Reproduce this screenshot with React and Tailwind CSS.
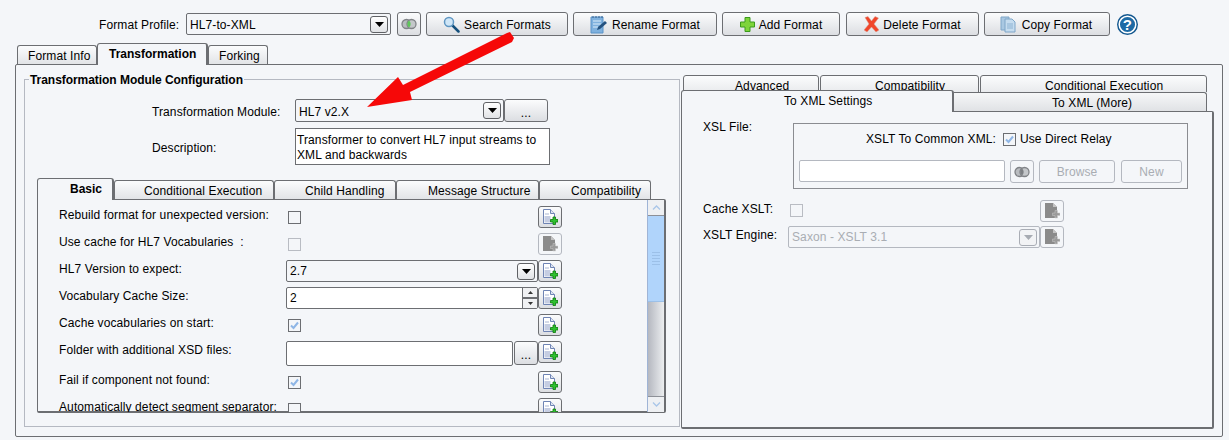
const font = { fontFamily: '"Liberation Sans", Arial, sans-serif' };

const btn = "flex items-center justify-center border border-[#6c6e72] rounded-[3px] bg-linear-to-b from-[#fbfcfd] to-[#dcdee2]";
const btnOff = "flex items-center justify-center border border-[#b4b8c0] rounded-[3px] bg-[#f4f6f9] text-[#a9adb3]";

function Arrow({ off }) {
  return (
    <span className={"flex h-[17px] w-[18px] shrink-0 items-center justify-center rounded-[3px] border " + (off ? "border-[#a9adb5] bg-[#f2f3f5]" : "border-[#5f6165] bg-linear-to-b from-white to-[#e1e3e6]")}>
      <svg width="9" height="5" viewBox="0 0 9 5"><path d="M0 0h9L4.5 5z" fill={off ? "#a7abb2" : "#000"} /></svg>
    </span>
  );
}

function Combo({ w, h = "h-[22px]", text, off, low }) {
  return (
    <div className={`flex ${w} ${h} shrink-0 items-center justify-between rounded-[2px] border pl-[3px] pr-[2px] ${off ? "border-[#b4b8c0] text-[#a9adb3]" : "border-[#6c6e72]"}`}>
      <span className={low ? "pt-[2px]" : ""}>{text}</span>
      <Arrow off={off} />
    </div>
  );
}

function Eye({ off }) {
  return (
    <svg width="16" height="12" viewBox="0 0 16 12">
      <circle cx="5.5" cy="6" r="4.5" fill="#b9bcc0" stroke="#808387" strokeWidth="1.3" />
      <circle cx="10.5" cy="6" r="4.5" fill="#c4c7ca" stroke="#808387" strokeWidth="1.3" />
      <path d="M8 2.5a4.5 4.5 0 0 1 0 7a4.5 4.5 0 0 1 0-7z" fill={off ? "#7d8084" : "#5fc65a"} />
    </svg>
  );
}

function DocIcon({ off }) {
  if (off) {
    return (
      <svg width="16" height="16" viewBox="0 0 16 16">
        <path d="M1 0h8l4 4v11H1z" fill="#8b8b8b" />
        <path d="M9 0v4h4z" fill="#c3c3c3" />
        <path d="M8.500 10h2.500V7.500h2.500V10H16v2.500h-2.500V15H11v-2.500H8.500z" fill="#9a9a9a" stroke="#c8c8c8" strokeWidth=".5" />
      </svg>
    );
  }
  return (
    <svg width="16" height="16" viewBox="0 0 16 16">
      <path d="M1.500.5h7l4 4v10h-11z" fill="#fff" stroke="#6f84b4" />
      <path d="M8.500.5v4h4" fill="#dfe5f2" stroke="#6f84b4" />
      <rect x="2.500" y="7" width="6" height="6.500" fill="#c5cde2" />
      <path d="M3 5h4" stroke="#a9b5d2" />
      <path d="M8.500 10.500h2.500V8h2.500v2.500H16V13h-2.500v2.500H11V13H8.500z" fill="#2fc02f" stroke="#0a7a0a" strokeWidth=".8" />
    </svg>
  );
}

function DocBtn({ off }) {
  return (
    <div className={(off ? btnOff : btn) + " h-[22px] w-[24px] shrink-0"}>
      <DocIcon off={off} />
    </div>
  );
}

function Check({ on, off }) {
  return (
    <span className={"flex h-[13px] w-[13px] shrink-0 items-center justify-center border bg-[#f4f6f9] " + (off ? "border-[#b9bcc3]" : "border-[#6c6e72]")}>
      {on && (
        <svg width="9" height="9" viewBox="0 0 9 9"><path d="M1 4.500l2.500 2.500L8 1.500" fill="none" stroke="#8fb6e6" strokeWidth="2" /></svg>
      )}
    </span>
  );
}

function ToolButton({ w, ml, icon, label, pr = "" }) {
  return (
    <div className={`${btn} ${w} ${ml} ${pr} h-[24px] shrink-0 gap-[4px]`}>
      {icon}
      <span className="pt-[2px]">{label}</span>
    </div>
  );
}

function TopTab({ w, pl, active, label }) {
  if (active) {
    return (
      <div className={`${w} ${pl} relative z-10 -mb-px flex h-[22px] items-start rounded-t-[3px] border border-r-2 border-b-0 border-[#6c6e72] bg-[#f4f6f9] pt-[3px] font-bold tracking-normal`}>
        {label}
      </div>
    );
  }
  return (
    <div className={`${w} ${pl} flex h-[19px] items-center rounded-t-[3px] border border-b-0 border-[#6c6e72] bg-linear-to-b from-[#fbfcfd] to-[#e2e4e7] pt-[2px]`}>
      {label}
    </div>
  );
}

function Row({ h = "h-[22px]", mb = "mb-[5px]", label, children }) {
  return (
    <div className={`${h} ${mb} flex items-start pl-[21px]`}>
      <div className="h-[18px] w-[227px] shrink-0 leading-[18px]">{label}</div>
      <div className="flex h-full w-[252px] shrink-0 items-start">{children}</div>
      <DocBtn off={label.startsWith("Use cache")} />
    </div>
  );
}

function Scrollbar() {
  return (
    <div className="flex h-[212px] w-[17px] shrink-0 flex-col border-l border-[#9fb4d6] bg-linear-to-r from-[#b5b8c0] to-[#eceef0]">
      <div className="flex h-[16px] items-center justify-center border-b border-[#8d9097] bg-[#eef0f3]">
        <svg width="9" height="5" viewBox="0 0 9 5"><path d="M1 4.500L4.500 1 8 4.500" fill="none" stroke="#a9c6e8" strokeWidth="1.300" /></svg>
      </div>
      <div className="flex h-[86px] flex-col items-center justify-center gap-[2px] bg-[#b0d4fb] border-b border-[#9cc0e8]">
        <div className="h-px w-[8px] bg-[#9cc0e8]" />
        <div className="h-px w-[8px] bg-[#9cc0e8]" />
        <div className="h-px w-[8px] bg-[#9cc0e8]" />
        <div className="h-px w-[8px] bg-[#9cc0e8]" />
        <div className="h-px w-[8px] bg-[#9cc0e8]" />
      </div>
      <div className="flex-1" />
      <div className="flex h-[16px] items-center justify-center border-t border-[#8d9097] bg-[#eef0f3]">
        <svg width="9" height="5" viewBox="0 0 9 5"><path d="M1 .5L4.500 4 8 .5" fill="none" stroke="#a9c6e8" strokeWidth="1.300" /></svg>
      </div>
    </div>
  );
}

function BasicPane() {
  return (
    <div className="ml-[12px] flex h-[214px] w-[629px] rounded-b-[2px] rounded-tr-[2px] border border-r-2 border-b-2 border-[#6c6e72]">
      <div className="h-[212px] flex-1 overflow-hidden pt-[6px]">
        <Row label="Rebuild format for unexpected version:">
          <span className="ml-[2px] mt-[5px]"><Check /></span>
        </Row>
        <Row label={"Use cache for HL7 Vocabularies\u00a0 :"}>
          <span className="ml-[2px] mt-[5px]"><Check off /></span>
        </Row>
        <Row label="HL7 Version to expect:">
          <Combo w="w-[252px]" text="2.7" />
        </Row>
        <Row label="Vocabulary Cache Size:">
          <div className="flex h-[22px] w-[252px] rounded-[2px] border border-[#6c6e72] bg-white">
            <span className="flex-1 pl-[3px] pt-[3px]">2</span>
            <div className="flex w-[15px] flex-col">
              <div className="flex h-[10px] items-center justify-center border-b border-l border-[#6c6e72] bg-[#f0f1f3]">
                <svg width="5" height="3" viewBox="0 0 5 3"><path d="M0 3h5L2.500 0z" fill="#333" /></svg>
              </div>
              <div className="flex flex-1 items-center justify-center border-l border-t border-[#6c6e72] bg-[#f0f1f3]">
                <svg width="5" height="3" viewBox="0 0 5 3"><path d="M0 0h5L2.500 3z" fill="#333" /></svg>
              </div>
            </div>
          </div>
        </Row>
        <Row label="Cache vocabularies on start:">
          <span className="ml-[2px] mt-[5px]"><Check on /></span>
        </Row>
        <Row h="h-[25px]" label="Folder with additional XSD files:">
          <div className="h-[25px] w-[227px] rounded-[2px] border border-[#6c6e72] bg-white" />
          <div className={btn + " ml-px h-[24px] w-[24px] pt-[4px]"}>...</div>
        </Row>
        <Row label="Fail if component not found:">
          <span className="ml-[2px] mt-[5px]"><Check on /></span>
        </Row>
        <Row label="Automatically detect segment separator:">
          <span className="ml-[2px] mt-[5px]"><Check /></span>
        </Row>
      </div>
      <Scrollbar />
    </div>
  );
}

function XmlSettings() {
  return (
    <div className="relative z-10 flex h-[318px] w-[533px] flex-col rounded-r-[2px] rounded-b-[2px] border border-r-2 border-b-2 border-[#6c6e72] bg-[#f4f6f9] pl-[21px] pt-[7px]">
      <div className="flex">
        <div className="h-[16px] w-[90px] shrink-0 leading-[16px]">XSL File:</div>
        <div className="mt-[4px] h-[66px] w-[395px] border border-[#8a8c91] px-[5px] pt-[8px]">
          <div className="flex h-[14px] items-center pl-[67px]">
            <span>XSLT To Common XML:</span>
            <span className="ml-[7px]"><Check on /></span>
            <span className="ml-[4px]">Use Direct Relay</span>
          </div>
          <div className="mt-[14px] flex">
            <div className="h-[22px] w-[206px] rounded-[2px] border border-[#b4b8c0] bg-white" />
            <div className={btnOff + " ml-[5px] h-[23px] w-[24px]"}><Eye off /></div>
            <div className={btnOff + " ml-[5px] h-[23px] w-[76px]"}>Browse</div>
            <div className={btnOff + " ml-[6px] h-[23px] w-[61px]"}>New</div>
          </div>
        </div>
      </div>
      <div className="mt-[11px] flex h-[22px]">
        <div className="h-[18px] w-[87px] shrink-0 leading-[18px]">Cache XSLT:</div>
        <span className="mt-[4px]"><Check off /></span>
        <div className="ml-[237px]"><DocBtn off /></div>
      </div>
      <div className="mt-[4px] flex h-[22px]">
        <div className="h-[18px] w-[85px] shrink-0 leading-[18px]">XSLT Engine:</div>
        <Combo w="w-[252px]" text="Saxon - XSLT 3.1" off />
        <DocBtn off />
      </div>
    </div>
  );
}

export default function App() {
  return (
    <div className="relative h-[440px] w-[1229px] overflow-hidden bg-[#f4f6f9] text-[12px] leading-[14px] tracking-[0.1px] text-black" style={font}>
      <div className="flex h-[36px] items-center pl-[99px] pt-[12px]">
        <span className="w-[87px] shrink-0 pt-[2px]">Format Profile:</span>
        <Combo w="w-[205px]" text="HL7-to-XML" low />
        <div className={btn + " ml-[6px] h-[24px] w-[24px]"}><Eye /></div>
        <ToolButton w="w-[142px]" ml="ml-[5px]" label="Search Formats" icon={
          <svg width="17" height="17" viewBox="0 0 17 17">
            <path d="M9 9l6.500 6.500" stroke="#14507c" strokeWidth="2.500" strokeLinecap="round" />
            <circle cx="6" cy="6" r="4.500" fill="#cfe6f7" stroke="#5f96c2" strokeWidth="1.500" />
          </svg>
        } />
        <ToolButton w="w-[144px]" ml="ml-[5px]" label="Rename Format" icon={
          <svg width="18" height="19" viewBox="0 0 18 19">
            <path d="M1 2h12v16H1z" fill="#7fb1de" stroke="#5b93c8" />
            <path d="M3 1v2M6 1v2M9 1v2M12 1v2" stroke="#36638f" />
            <path d="M3 6h8M3 9h8M3 12h5" stroke="#dcecf9" />
            <path d="M7 15l1-3 7-6 2 2-7 6z" fill="#24527f" />
          </svg>
        } />
        <ToolButton w="w-[118px]" ml="ml-[5px]" label="Add Format" icon={
          <svg width="15" height="15" viewBox="0 0 15 15">
            <path d="M5 .5h5v4.500h4.500v5H10v4.500H5V10H.5V5H5z" fill="#7ed43a" stroke="#3b9a1c" />
          </svg>
        } />
        <ToolButton w="w-[133px]" ml="ml-[6px]" label="Delete Format" icon={
          <svg width="15" height="16" viewBox="0 0 15 16">
            <path d="M1 1.500l3-1 3.500 4.500L11 .5l3.500 1.500L10 8l5 6-3 2-4.500-5L3 16l-3-2 5-6z" fill="#f0452a" stroke="#d8a090" strokeWidth=".5" />
          </svg>
        } />
        <ToolButton w="w-[126px]" ml="ml-[5px]" pr="pr-[2px]" label="Copy Format" icon={
          <svg width="16" height="18" viewBox="0 0 16 18" className="mr-[2px]">
            <path d="M1 2h8v13H1z" fill="#a9c8e2" stroke="#7ea6c8" />
            <path d="M5 4h7l3 3v10H5z" fill="#c5dcef" stroke="#7ea6c8" />
            <path d="M7 9h6M7 11h6M7 13h6" stroke="#8db3d3" />
          </svg>
        } />
        <svg width="21" height="21" viewBox="0 0 21 21" className="ml-[7px] shrink-0">
          <circle cx="10.500" cy="10.500" r="10.500" fill="#12578f" />
          <circle cx="10.500" cy="10.500" r="8.300" fill="#1d6aa5" stroke="#fff" strokeWidth="1.500" />
          <text x="10.500" y="15.500" textAnchor="middle" fontSize="15" fontWeight="700" fill="#fff">?</text>
        </svg>
      </div>

      <div className="ml-[17px] mt-[7px] flex h-[21px] items-end">
        <TopTab w="w-[80px]" pl="pl-[10px]" label="Format Info" />
        <TopTab active w="w-[111px]" pl="pl-[11px]" label="Transformation" />
        <TopTab w="w-[60px]" pl="pl-[10px]" label="Forking" />
      </div>

      <div className="ml-[15px] flex h-[373px] w-[1208px] rounded-[2px] border border-[#6c6e72]">
        <div className="pl-[8px] pt-[7px]">
          <fieldset className="h-[355px] w-[656px] border border-[#b5b9c2]">
            <legend className="ml-[4px] h-[14px] px-[1px] font-bold leading-[16px] tracking-[-0.05px]">Transformation Module Configuration</legend>
            <div className="mt-[13px] flex">
              <div className="w-[270px] shrink-0 pl-[127px] pt-[6px]">Transformation Module:</div>
              <Combo w="w-[209px]" h="h-[23px]" text="HL7 v2.X" low />
              <div className={btn + " h-[23px] w-[44px] pt-[5px]"}>...</div>
            </div>
            <div className="mt-[6px] flex">
              <div className="w-[270px] shrink-0 pl-[127px] pt-[13px]">Description:</div>
              <div className="h-[37px] w-[255px] border border-[#6c6e72] bg-white pl-[1px] pt-[4px] leading-[15px]">
                Transformer to convert HL7 input streams to XML and backwards
              </div>
            </div>
            <div className="ml-[12px] mt-[13px] flex h-[21px] items-end">
              <TopTab active w="w-[77px]" pl="pl-[32px]" label="Basic" />
              <TopTab w="w-[160px]" pl="pl-[29px]" label="Conditional Execution" />
              <TopTab w="w-[122px]" pl="pl-[30px]" label="Child Handling" />
              <TopTab w="w-[143px]" pl="pl-[31px]" label="Message Structure" />
              <TopTab w="w-[112px]" pl="pl-[31px]" label="Compatibility" />
            </div>
            <BasicPane />
          </fieldset>
        </div>

        <div className="ml-px pt-[10px]">
          <div className="ml-[2px] flex h-[17px] gap-px overflow-hidden">
            <div className="h-[24px] w-[136px] rounded-t-[3px] border border-[#6c6e72] bg-linear-to-b from-[#fbfcfd] to-[#e2e4e7] pl-[51px] pt-[3px]">Advanced</div>
            <div className="h-[24px] w-[159px] rounded-t-[3px] border border-[#6c6e72] bg-linear-to-b from-[#fbfcfd] to-[#e2e4e7] pl-[54px] pt-[3px]">Compatibility</div>
            <div className="h-[24px] w-[227px] rounded-t-[3px] border border-[#6c6e72] bg-linear-to-b from-[#fbfcfd] to-[#e2e4e7] pl-[64px] pt-[3px]">Conditional Execution</div>
          </div>
          <div className="relative z-20 flex h-[19px] items-end">
            <div className="-mb-px flex h-[22px] w-[273px] items-start rounded-t-[3px] border border-r-2 border-b-0 border-[#6c6e72] bg-[#f4f6f9] pl-[102px] pt-[3px]">To XML Settings</div>
            <div className="flex h-[19px] w-[253px] items-center rounded-tr-[3px] border border-l-0 border-b-0 border-[#6c6e72] bg-linear-to-b from-[#f6f7f8] to-[#e0e2e5] pl-[98px] pt-[2px]">To XML (More)</div>
          </div>
          <XmlSettings />
        </div>
      </div>

      <svg width="170" height="90" viewBox="0 0 170 90" className="absolute left-[360px] top-[25px]">
        <polygon points="7,82 38,52 43,60 147,8 150,7 154,13 152,17 50,67 52,75" fill="#f60808" />
      </svg>
    </div>
  );
}
